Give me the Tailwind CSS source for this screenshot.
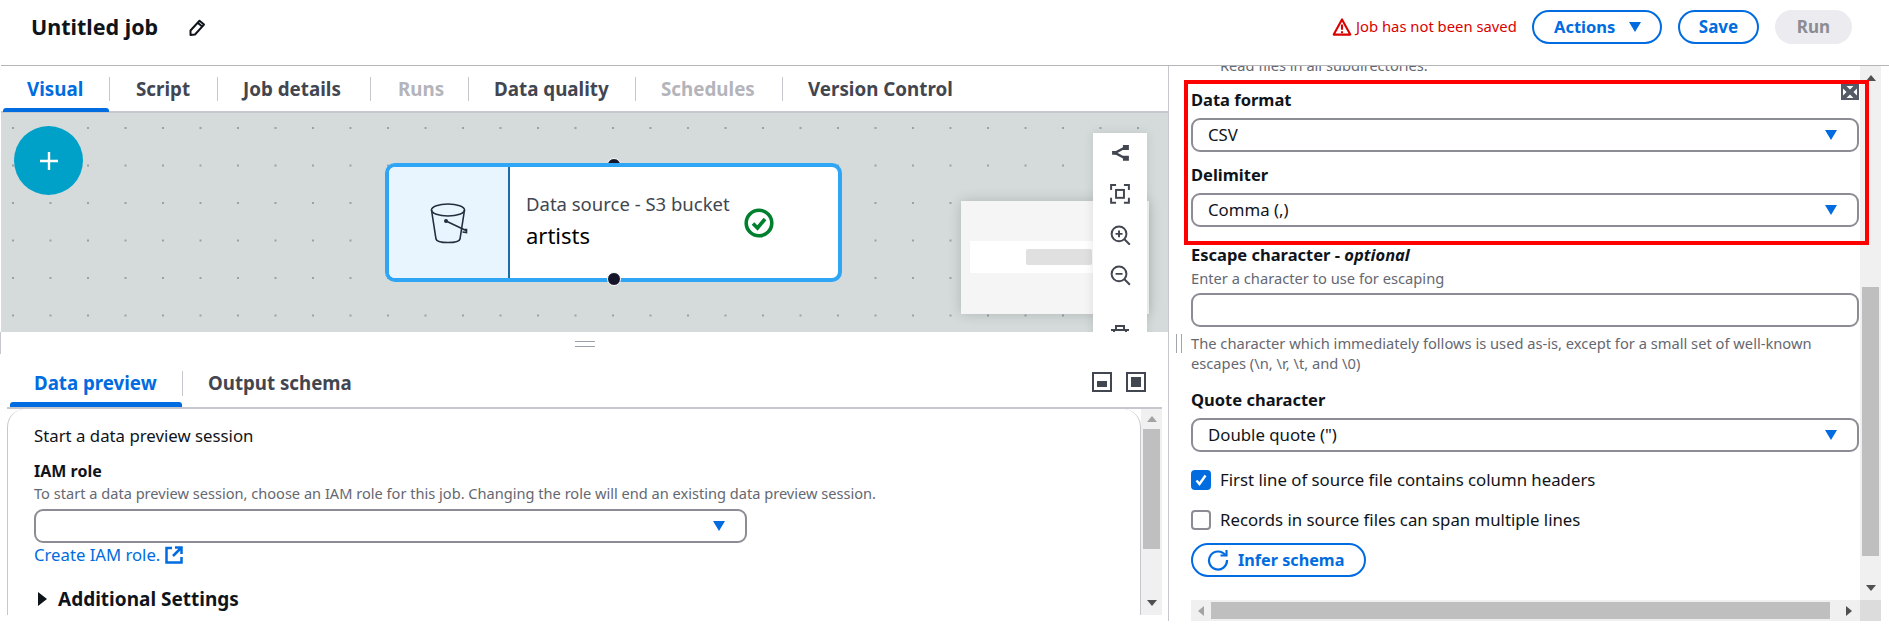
<!DOCTYPE html>
<html><head><meta charset="utf-8"><script src="https://cdn.jsdelivr.net/npm/@tailwindcss/browser@4"></script></head>
<body class="bg-white">
<div class="relative w-[1889px] h-[643px] overflow-hidden bg-white font-['Noto_Sans',sans-serif] text-[#0f141a]">
  <header class="h-[66px] ml-px border-b border-[#b4b6ba] flex items-center bg-white relative z-10">
    <h1 class="ml-[30px] text-[21.500px] font-bold leading-[24px] -mt-[12px]">Untitled job</h1>
    <svg class="ml-[30px] -mt-[9px] w-[18px] h-[18px]" viewBox="0 0 18 18" fill="none" stroke="#0f141a" stroke-width="2" stroke-linejoin="round"><path d="M2.500 16V11.500L11.500 1.800 16 5.600 7 15.500 2.500 16Z"/><path d="M10 4l4.200 3.600"/></svg>
    <div class="ml-auto flex items-center -mt-[11px]">
      <svg class="w-[20px] h-[20px]" viewBox="0 0 21 20" fill="none" stroke="#db0000" stroke-width="2.200" stroke-linejoin="round"><path d="M10.500 2 1.800 18h17.400L10.500 2Z"/><path d="M10.500 7.500v5.500M10.500 14.500v2"/></svg>
      <span class="ml-[4px] text-[#db0000] text-[14.800px] leading-[20px] w-[176px] whitespace-nowrap -mt-[3px]">Job has not been saved</span>
      <div class="w-[130px] h-[34px] rounded-full border-2 border-[#006ce0] text-[#006ce0] font-bold text-[16.500px] flex items-center pl-[20px]">Actions<svg class="ml-[14px] w-[12px] h-[12px]" viewBox="0 0 12 12" fill="#006ce0"><path d="M0 1h12L6 11z"/></svg></div>
      <div class="ml-[16px] w-[81px] h-[34px] rounded-full border-2 border-[#006ce0] text-[#006ce0] font-bold text-[17px] flex items-center justify-center">Save</div>
      <div class="ml-[16px] mr-[37px] w-[77px] h-[34px] rounded-full bg-[#ebebf0] text-[#8c8c94] font-bold text-[17px] flex items-center justify-center">Run</div>
    </div>
  </header>
  <div class="flex h-[555px]">
    <section class="w-[1169px] shrink-0 border-r border-[#c6c6cd] pl-px">
      <nav class="h-[47px] flex border-b-2 border-[#c6c6cd] text-[18.800px] font-bold text-[#424650] whitespace-nowrap">
        <div class="w-[106px] h-[46px] ml-[2px] flex flex-col"><div class="h-[42px] pt-[4px] pl-[24px] flex items-center text-[#006ce0]">Visual</div><div class="h-[4px] rounded-t-[3px] bg-[#006ce0]"></div></div>
        <span class="w-px h-[24px] mt-[11px] bg-[#c6c6cd]"></span>
        <div class="w-[107px] pl-[26px] pt-[4px] h-[42px] flex items-center">Script</div>
        <span class="w-px h-[24px] mt-[11px] bg-[#c6c6cd]"></span>
        <div class="w-[152px] pl-[25px] pt-[4px] h-[42px] flex items-center">Job details</div>
        <span class="w-px h-[24px] mt-[11px] bg-[#c6c6cd]"></span>
        <div class="w-[97px] pl-[27px] pt-[4px] h-[42px] flex items-center text-[#b4b4bb]">Runs</div>
        <span class="w-px h-[24px] mt-[11px] bg-[#c6c6cd]"></span>
        <div class="w-[166px] pl-[25px] pt-[4px] h-[42px] flex items-center">Data quality</div>
        <span class="w-px h-[24px] mt-[11px] bg-[#c6c6cd]"></span>
        <div class="w-[146px] pl-[25px] pt-[4px] h-[42px] flex items-center text-[#b4b4bb]">Schedules</div>
        <span class="w-px h-[24px] mt-[11px] bg-[#c6c6cd]"></span>
        <div class="pl-[25px] pt-[4px] h-[42px] flex items-center">Version Control</div>
      </nav>
      <div class="relative h-[219px] overflow-hidden bg-[#d5dbdb] bg-[radial-gradient(circle,#98a2a5_1px,transparent_1.200px)] bg-[length:37.500px_37.500px] bg-[position:-6.750px_-3.750px]">
        <div class="absolute left-[13px] top-[13px] w-[69px] h-[69px] rounded-full bg-[#00a1c9] flex items-center justify-center">
          <svg class="w-[24px] h-[24px]" viewBox="0 0 24 24" stroke="#fff" stroke-width="2.400"><path d="M12 3v18M3 12h18"/></svg>
        </div>
        <span class="absolute left-[606px] top-[45px] w-[14px] h-[14px] rounded-full bg-[#16162b] border border-white"></span>
        <div class="absolute left-[384px] top-[50px] w-[457px] h-[119px] rounded-[10px] border-[4px] border-[#2ea6f5] bg-white flex overflow-hidden">
          <div class="w-[121px] shrink-0 bg-[#e8f5fe] border-r-2 border-[#1a6ea8] flex items-center justify-center">
            <svg class="w-[38px] h-[42px]" viewBox="0 0 38 42" fill="none" stroke="#232f3e" stroke-width="1.600"><ellipse cx="18" cy="8" rx="16.500" ry="6"/><path d="M1.500 8 6 37c.5 2.500 6 3.500 12 3.500s11.500-1 12-3.500L34.500 8"/><path d="M16 19 36 28.500M32.500 27.500l4 0 0 3-4-.5"/><circle cx="16" cy="19" r="1.200" fill="#232f3e"/></svg>
          </div>
          <div class="pl-[16px] pt-[25px]">
            <div class="text-[18.500px] leading-[24px] text-[#424650] whitespace-nowrap">Data source - S3 bucket</div>
            <div class="mt-[5px] text-[22px] leading-[28px] text-black">artists</div>
          </div>
          <svg class="ml-[14px] mt-[41px] w-[30px] h-[30px]" viewBox="0 0 30 30" fill="none" stroke="#00802f"><circle cx="15" cy="15" r="12.800" stroke-width="3.600"/><path d="M9 15.500 13.500 20 21 11" stroke-width="3.600"/></svg>
        </div>
        <span class="absolute left-[606px] top-[159px] w-[14px] h-[14px] rounded-full bg-[#16162b] border border-white"></span>
        <div class="absolute left-[960px] top-[88px] w-[188px] h-[113px] bg-[#f5f5f5] shadow-[0_0_12px_rgba(0,0,0,0.18)] pt-[40px] pl-[9px]">
          <div class="w-[123px] h-[32px] bg-white pt-[8px] pl-[56px]"><div class="w-[66px] h-[16px] rounded-[2px] bg-[#e0e0e0]"></div></div>
        </div>
        <div class="absolute left-[1092px] top-[20px] w-[54px] h-[210px] bg-white shadow-[0_0_10px_rgba(0,0,0,0.1)] flex flex-col items-center pt-[11px]">
          <svg class="w-[18px] h-[18px]" viewBox="0 0 18 18" fill="#424650"><path d="M1 7h5v4H1zM12 1h6v5h-6zM12 12h6v5h-6z"/><path d="M4 9 14 3.500M4 9l10 5.500" stroke="#424650" stroke-width="2.400"/></svg>
          <svg class="mt-[22px] w-[20px] h-[20px]" viewBox="0 0 20 20" fill="none" stroke="#424650" stroke-width="2"><path d="M1 6V1h5M14 1h5v5M19 14v5h-5M6 19H1v-5"/><rect x="6" y="6" width="8" height="8"/></svg>
          <svg class="mt-[21px] w-[21px] h-[21px]" viewBox="0 0 21 21" fill="none" stroke="#424650" stroke-width="2"><circle cx="9" cy="9" r="7.500"/><path d="M14.500 14.500 20 20M5.500 9h7M9 5.500v7"/></svg>
          <svg class="mt-[20px] w-[21px] h-[21px]" viewBox="0 0 21 21" fill="none" stroke="#424650" stroke-width="2"><circle cx="9" cy="9" r="7.500"/><path d="M14.500 14.500 20 20M5.500 9h7"/></svg>
          <svg class="mt-[39px] w-[18px] h-[18px] shrink-0" viewBox="0 0 18 18" fill="none" stroke="#424650" stroke-width="2"><path d="M0 5h18M5 5V1h8v4"/><path d="M3 5v12h12V5"/></svg>
        </div>
      </div>
      <div class="h-[22px] border-l border-[#c6c6cd] -ml-px pt-[9px] flex justify-center"><div class="w-[20px] h-[6px] border-y border-[#9ba1a8]"></div></div>
      <nav class="h-[53px] flex text-[18.700px] font-bold text-[#424650] pl-[9px] relative whitespace-nowrap">
        <div class="w-[172px] flex flex-col"><div class="h-[48px] pt-[10px] pl-[24px] flex items-center text-[#006ce0]">Data preview</div><div class="h-[5px] rounded-t-[3px] bg-[#006ce0]"></div></div>
        <span class="w-px h-[25px] mt-[17px] bg-[#c6c6cd]"></span>
        <div class="pl-[25px] pt-[10px] h-[48px] flex items-center">Output schema</div>
        <svg class="ml-auto mt-[18px] w-[20px] h-[20px]" viewBox="0 0 20 20"><rect x="1" y="1" width="18" height="18" fill="none" stroke="#424650" stroke-width="2"/><rect x="5" y="9" width="10" height="6" fill="#424650"/></svg>
        <svg class="ml-[14px] mr-[22px] mt-[18px] w-[20px] h-[20px]" viewBox="0 0 20 20"><rect x="1" y="1" width="18" height="18" fill="none" stroke="#424650" stroke-width="2"/><rect x="5" y="5" width="10" height="10" fill="#424650"/></svg>
      </nav>
      <div class="ml-[6px] mr-[6px] h-[208px] border-t-2 border-[#c6c6cd] flex">
        <div class="flex-1 h-[206px] rounded-t-[18px] border-x border-[#c6c6cd] pl-[26px] pt-[15px] overflow-hidden">
          <p class="text-[16.800px] leading-[24px]">Start a data preview session</p>
          <p class="mt-[11px] text-[16px] leading-[24px] font-bold">IAM role</p>
          <p class="text-[14.600px] leading-[20px] text-[#656871] whitespace-nowrap">To start a data preview session, choose an IAM role for this job. Changing the role will end an existing data preview session.</p>
          <div class="mt-[6px] w-[713px] h-[34px] rounded-[9px] border-2 border-[#8c8c94] flex items-center justify-end pr-[20px]"><svg class="w-[12px] h-[12px]" viewBox="0 0 12 12" fill="#006ce0"><path d="M0 1h12L6 11z"/></svg></div>
          <p class="flex items-center text-[#006ce0] text-[16.700px] leading-[24px] h-[24px]">Create IAM role.<svg class="ml-[5px] w-[18px] h-[18px]" viewBox="0 0 18 18" fill="none" stroke="#006ce0" stroke-width="2.500"><path d="M7 2H1.500v14.500h15V11M10 1.500h6.500V8M16.500 1.500 8 10"/></svg></p>
          <p class="mt-[19px] flex items-center text-[19px] leading-[26px] font-bold"><svg class="ml-[4px] mr-[11px] w-[9px] h-[14px]" viewBox="0 0 9 14" fill="#0f141a"><path d="M0 0l9 7-9 7z"/></svg>Additional Settings</p>
        </div>
        <div class="w-[21px] h-[206px] bg-[#f0f0f0] flex flex-col items-center">
          <svg class="mt-[7px] w-[10px] h-[6px]" viewBox="0 0 10 6" fill="#a3a3a3"><path d="M5 0l5 6H0z"/></svg>
          <div class="mt-[7px] w-[17px] h-[120px] bg-[#bfbfbf]"></div>
          <svg class="mt-[51px] w-[10px] h-[6px]" viewBox="0 0 10 6" fill="#505050"><path d="M0 0h10L5 6z"/></svg>
        </div>
      </div>
    </section>
    <aside class="relative w-[720px] h-[555px] shrink-0">
      <div class="flex h-[534px]">
        <div class="w-[691px] overflow-hidden pl-[22px] pr-[1px]">
          <p class="-mt-[11px] pl-[29px] text-[14.600px] leading-[20px] text-[#656871]">Read files in all subdirectories.</p>
          <p class="mt-[13px] text-[16.500px] leading-[24px] font-bold">Data format</p>
          <div class="mt-[6px] h-[34px] rounded-[9px] border-2 border-[#8c8c94] flex items-center justify-between pl-[15px] pr-[20px] text-[16.800px]">CSV<svg class="w-[12px] h-[12px]" viewBox="0 0 12 12" fill="#006ce0"><path d="M0 1h12L6 11z"/></svg></div>
          <p class="mt-[11px] text-[16.500px] leading-[24px] font-bold">Delimiter</p>
          <div class="mt-[6px] h-[34px] rounded-[9px] border-2 border-[#8c8c94] flex items-center justify-between pl-[15px] pr-[20px] text-[16.800px]">Comma (,)<svg class="w-[12px] h-[12px]" viewBox="0 0 12 12" fill="#006ce0"><path d="M0 1h12L6 11z"/></svg></div>
          <p class="mt-[16px] text-[16.500px] leading-[24px] font-bold">Escape character - <i>optional</i></p>
          <p class="mt-[1px] text-[14.700px] leading-[20px] text-[#656871]">Enter a character to use for escaping</p>
          <div class="mt-[5px] h-[34px] rounded-[9px] border-2 border-[#8c8c94]"></div>
          <p class="mt-[6px] text-[14.700px] leading-[20px] text-[#656871] w-[640px]">The character which immediately follows is used as-is, except for a small set of well-known escapes (\n, \r, \t, and \0)</p>
          <p class="mt-[15px] text-[16.500px] leading-[24px] font-bold">Quote character</p>
          <div class="mt-[6px] h-[34px] rounded-[9px] border-2 border-[#8c8c94] flex items-center justify-between pl-[15px] pr-[20px] text-[16.800px]">Double quote (")<svg class="w-[12px] h-[12px]" viewBox="0 0 12 12" fill="#006ce0"><path d="M0 1h12L6 11z"/></svg></div>
          <div class="mt-[18px] h-[20px] flex items-center text-[16.800px]"><span class="w-[20px] h-[20px] rounded-[4px] bg-[#006ce0] flex items-center justify-center"><svg class="w-[14px] h-[14px]" viewBox="0 0 14 14" fill="none" stroke="#fff" stroke-width="2.400"><path d="M2.500 7.500 5.500 11 11.500 2.500"/></svg></span><span class="ml-[9px]">First line of source file contains column headers</span></div>
          <div class="mt-[20px] h-[20px] flex items-center text-[16.800px]"><span class="w-[20px] h-[20px] rounded-[4px] border-2 border-[#8c8c94]"></span><span class="ml-[9px]">Records in source files can span multiple lines</span></div>
          <div class="mt-[13px] w-[175px] h-[34px] rounded-full border-2 border-[#006ce0] flex items-center pl-[14px] text-[#006ce0] font-bold text-[16.200px]"><svg class="w-[22px] h-[22px] mr-[9px]" viewBox="0 0 22 22" fill="none" stroke="#006ce0" stroke-width="2.200"><path d="M18.500 6.500A9 9 0 1 0 20 11"/><path d="M13.500 6.500h6V1"/></svg>Infer schema</div>
        </div>
        <div class="w-[21px] h-[534px] bg-[#f0f0f0] flex flex-col items-center">
          <svg class="mt-[9px] w-[10px] h-[6px]" viewBox="0 0 10 6" fill="#505050"><path d="M5 0l5 6H0z"/></svg>
          <div class="mt-[206px] w-[17px] h-[269px] bg-[#bfbfbf]"></div>
          <svg class="mt-[29px] w-[10px] h-[6px]" viewBox="0 0 10 6" fill="#505050"><path d="M0 0h10L5 6z"/></svg>
        </div>
      </div>
      <div class="ml-[22px] w-[690px] h-[21px] flex">
        <div class="w-[669px] bg-[#f0f0f0] flex items-center pl-[7px]">
          <svg class="w-[6px] h-[10px]" viewBox="0 0 6 10" fill="#a3a3a3"><path d="M6 0v10L0 5z"/></svg>
          <div class="ml-[7px] w-[619px] h-[17px] bg-[#bfbfbf]"></div>
          <svg class="ml-[16px] w-[6px] h-[10px]" viewBox="0 0 6 10" fill="#505050"><path d="M0 0l6 5-6 5z"/></svg>
        </div>
        <div class="w-[21px] bg-[#dcdcdc]"></div>
      </div>
      <div class="absolute left-[7px] top-[268px] w-[6px] h-[19px] border-x border-[#9fa5ab]"></div>
      <div class="absolute left-[15px] top-[14px] w-[685px] h-[165px] border-[4px] border-[#ff0000]"></div>
      <svg class="absolute left-[672px] top-[18px] w-[18px] h-[16px]" viewBox="0 0 18 16"><rect width="18" height="16" fill="#545b66"/><path d="M5.500 2h7L9 5.500zM5.500 14h7L9 10.500zM2 4.500v7L5.500 8zM16 4.500v7L12.500 8z" fill="#fff"/></svg>
    </aside>
  </div>
</div>
</body></html>
